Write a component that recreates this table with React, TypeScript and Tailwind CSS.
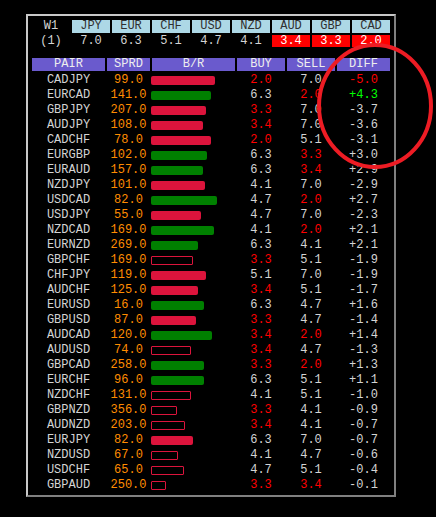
import React from 'react';

type Bar = 'red' | 'green' | 'outline';

interface Row {
  pair: string;
  sprd: string;
  bar: Bar;
  w: number;
  buy: string;
  sell: string;
  diff: string;
}

const currencies = [
  { name: 'JPY', val: '7.0' },
  { name: 'EUR', val: '6.3' },
  { name: 'CHF', val: '5.1' },
  { name: 'USD', val: '4.7' },
  { name: 'NZD', val: '4.1' },
  { name: 'AUD', val: '3.4', low: true },
  { name: 'GBP', val: '3.3', low: true },
  { name: 'CAD', val: '2.0', low: true },
];

const lowVals = ['2.0', '3.3', '3.4'];

const rows: Row[] = [
  { pair: 'CADJPY', sprd: '99.0', bar: 'red', w: 64, buy: '2.0', sell: '7.0', diff: '-5.0' },
  { pair: 'EURCAD', sprd: '141.0', bar: 'green', w: 60, buy: '6.3', sell: '2.0', diff: '+4.3' },
  { pair: 'GBPJPY', sprd: '207.0', bar: 'red', w: 55, buy: '3.3', sell: '7.0', diff: '-3.7' },
  { pair: 'AUDJPY', sprd: '108.0', bar: 'red', w: 52, buy: '3.4', sell: '7.0', diff: '-3.6' },
  { pair: 'CADCHF', sprd: '78.0', bar: 'red', w: 60, buy: '2.0', sell: '5.1', diff: '-3.1' },
  { pair: 'EURGBP', sprd: '102.0', bar: 'green', w: 56, buy: '6.3', sell: '3.3', diff: '+3.0' },
  { pair: 'EURAUD', sprd: '157.0', bar: 'green', w: 52, buy: '6.3', sell: '3.4', diff: '+2.9' },
  { pair: 'NZDJPY', sprd: '101.0', bar: 'red', w: 54, buy: '4.1', sell: '7.0', diff: '-2.9' },
  { pair: 'USDCAD', sprd: '82.0', bar: 'green', w: 66, buy: '4.7', sell: '2.0', diff: '+2.7' },
  { pair: 'USDJPY', sprd: '55.0', bar: 'red', w: 50, buy: '4.7', sell: '7.0', diff: '-2.3' },
  { pair: 'NZDCAD', sprd: '169.0', bar: 'green', w: 63, buy: '4.1', sell: '2.0', diff: '+2.1' },
  { pair: 'EURNZD', sprd: '269.0', bar: 'green', w: 47, buy: '6.3', sell: '4.1', diff: '+2.1' },
  { pair: 'GBPCHF', sprd: '169.0', bar: 'outline', w: 42, buy: '3.3', sell: '5.1', diff: '-1.9' },
  { pair: 'CHFJPY', sprd: '119.0', bar: 'red', w: 55, buy: '5.1', sell: '7.0', diff: '-1.9' },
  { pair: 'AUDCHF', sprd: '125.0', bar: 'red', w: 47, buy: '3.4', sell: '5.1', diff: '-1.7' },
  { pair: 'EURUSD', sprd: '16.0', bar: 'green', w: 53, buy: '6.3', sell: '4.7', diff: '+1.6' },
  { pair: 'GBPUSD', sprd: '87.0', bar: 'red', w: 45, buy: '3.3', sell: '4.7', diff: '-1.4' },
  { pair: 'AUDCAD', sprd: '120.0', bar: 'green', w: 61, buy: '3.4', sell: '2.0', diff: '+1.4' },
  { pair: 'AUDUSD', sprd: '74.0', bar: 'outline', w: 40, buy: '3.4', sell: '4.7', diff: '-1.3' },
  { pair: 'GBPCAD', sprd: '258.0', bar: 'green', w: 53, buy: '3.3', sell: '2.0', diff: '+1.3' },
  { pair: 'EURCHF', sprd: '96.0', bar: 'green', w: 53, buy: '6.3', sell: '5.1', diff: '+1.1' },
  { pair: 'NZDCHF', sprd: '131.0', bar: 'outline', w: 40, buy: '4.1', sell: '5.1', diff: '-1.0' },
  { pair: 'GBPNZD', sprd: '356.0', bar: 'outline', w: 26, buy: '3.3', sell: '4.1', diff: '-0.9' },
  { pair: 'AUDNZD', sprd: '203.0', bar: 'outline', w: 34, buy: '3.4', sell: '4.1', diff: '-0.7' },
  { pair: 'EURJPY', sprd: '82.0', bar: 'red', w: 42, buy: '6.3', sell: '7.0', diff: '-0.7' },
  { pair: 'NZDUSD', sprd: '67.0', bar: 'outline', w: 27, buy: '4.1', sell: '4.7', diff: '-0.6' },
  { pair: 'USDCHF', sprd: '65.0', bar: 'outline', w: 33, buy: '4.7', sell: '5.1', diff: '-0.4' },
  { pair: 'GBPAUD', sprd: '250.0', bar: 'outline', w: 15, buy: '3.3', sell: '3.4', diff: '-0.1' },
];

const barClass = (b: Bar) => {
  switch (b) {
    case 'red': return 'bg-[#dc143c] rounded-[2px]';
    case 'green': return 'bg-[#008000] rounded-[2px]';
    default: return 'border border-[#dc143c] rounded-[1px]';
  }
};

const diffColor = (d: string, i: number) => {
  if (i === 0) return 'text-[#ff0000]';
  if (i === 1) return 'text-[#00ff00]';
  return 'text-[#d4d4d4]';
};

const cols = 'grid grid-cols-[73px_43px_83px_48px_48px_53px] gap-x-[2px]';

export default function App() {
  return (
    <div className="relative w-[436px] h-[517px] bg-black overflow-hidden font-['Liberation_Mono','Courier_New',monospace] text-[12px] text-[#d4d4d4]">
      <div className="pt-[14px] pl-[26px]">
        <div className="w-[370px] h-[483px] border-2 border-t-[#c8c8c8] border-l-[#c8c8c8] border-r-[#808080] border-b-[#808080] pt-[4px] pl-[4px]">
          {/* Currency strength header */}
          <div className="grid grid-cols-[38px_repeat(8,38px)] gap-x-[2px] gap-y-[2px]">
            <div className="h-[13px] leading-[13px] text-center">W1</div>
            {currencies.map((c) => (
              <div key={c.name} className="h-[13px] leading-[13px] text-center bg-[#add8e6] text-[#303030]">
                {c.name}
              </div>
            ))}
            <div className="h-[12px] leading-[12px] text-center">(1)</div>
            {currencies.map((c) => (
              <div
                key={c.name + 'v'}
                className={`h-[12px] leading-[12px] text-center ${c.low ? 'bg-[#ff0000] text-white' : ''}`}
              >
                {c.val}
              </div>
            ))}
          </div>

          {/* Table header */}
          <div className={`${cols} mt-[11px] text-[#eeeeee]`}>
            {['PAIR', 'SPRD', 'B/R', 'BUY', 'SELL', 'DIFF'].map((h) => (
              <div key={h} className="h-[13px] leading-[13px] text-center bg-[#6a5acd]">{h}</div>
            ))}
          </div>

          {/* Rows */}
          <div className="mt-[2px]">
            {rows.map((r, i) => (
              <div key={r.pair} className={`${cols} h-[15px] leading-[15px]`}>
                <div className="text-center">{r.pair}</div>
                <div className="text-center text-[#ff8c00]">{r.sprd}</div>
                <div className="flex items-center -ml-px">
                  <div className={`h-[9px] ${barClass(r.bar)}`} style={{ width: r.w }} />
                </div>
                <div className={`text-center ${lowVals.includes(r.buy) ? 'text-[#ff0000]' : ''}`}>{r.buy}</div>
                <div className={`text-center ${lowVals.includes(r.sell) ? 'text-[#ff0000]' : ''}`}>{r.sell}</div>
                <div className={`text-center ${diffColor(r.diff, i)}`}>{r.diff}</div>
              </div>
            ))}
          </div>
        </div>
      </div>

      {/* hand-drawn annotation circle */}
      <svg className="absolute left-0 top-0 pointer-events-none" width="436" height="517">
        <ellipse cx="375" cy="106" rx="56" ry="61" fill="none" stroke="#ed1c24" strokeWidth="4" />
      </svg>
    </div>
  );
}
